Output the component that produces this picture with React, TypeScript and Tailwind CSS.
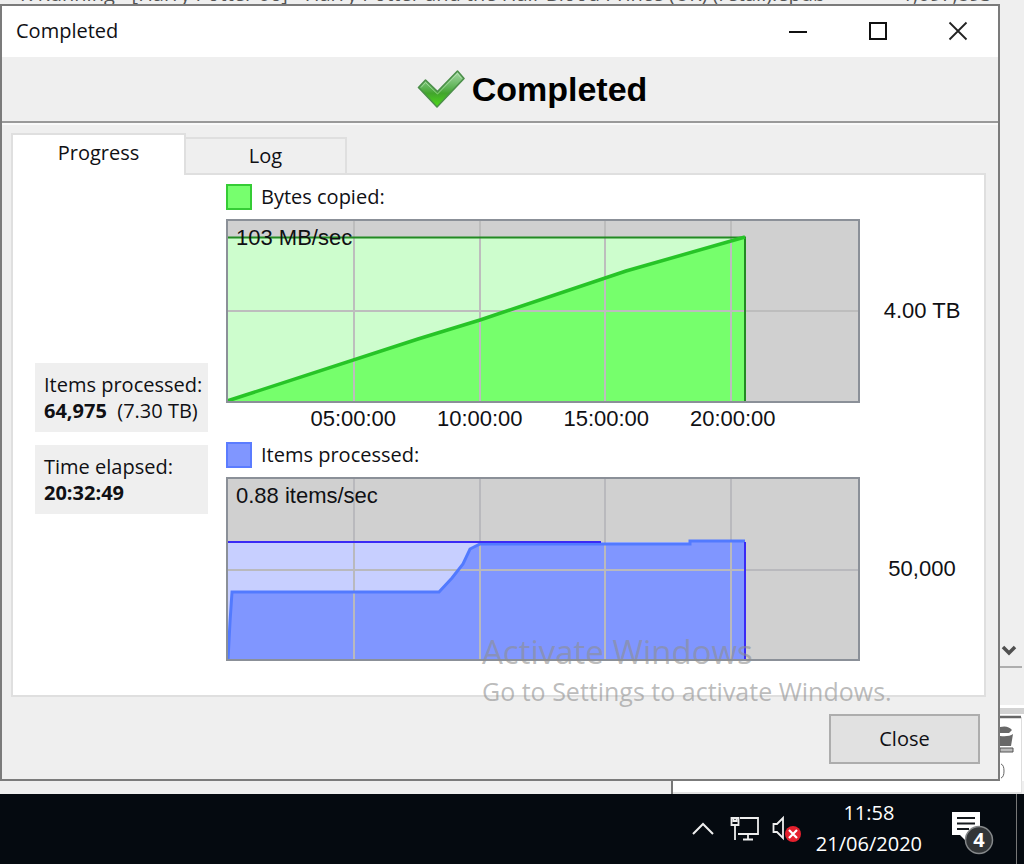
import React, { useState } from "react";

const TIMES = ["05:00:00", "10:00:00", "15:00:00", "20:00:00"];
const GRID_X = [128, 254, 379, 505];

type ChartProps = {
  title: string;
  rate: string;
  axis: string;
  swatch: string;
  children: React.ReactNode;
  times?: string[];
};

function Chart({ title, rate, axis, swatch, children, times }: ChartProps) {
  return (
    <section>
      <h2 className="flex h-[26px] items-center gap-[9px] text-xl leading-[26px]">
        <span className={`size-[26px] border-2 ${swatch}`} />
        {title}
      </h2>
      <div className="mt-[9px] flex items-center font-['Liberation_Sans',sans-serif] text-[22px] leading-[26px]">
        <div className="relative min-w-0 flex-1">
          <svg viewBox="0 0 634 184" preserveAspectRatio="none" className="block h-[184px] w-full" role="img" aria-label={title}>
            {children}
          </svg>
          <span className="absolute top-[6px] left-[10px]">{rate}</span>
        </div>
        <span className="w-[124px] text-center">{axis}</span>
      </div>
      {times && (
        <div className="mr-[124px] grid grid-cols-4 px-16 pt-[3px] text-center font-['Liberation_Sans',sans-serif] text-[22px] leading-[26px]">
          {times.map((t) => (
            <span key={t}>{t}</span>
          ))}
        </div>
      )}
    </section>
  );
}

function Grid({ y, color }: { y: number; color: string }) {
  return (
    <g stroke={color} strokeWidth="2">
      {GRID_X.map((x) => (
        <path key={x} d={`M${x} 1V183`} />
      ))}
      <path d={`M1 ${y}H633`} />
    </g>
  );
}

function Frame() {
  return <rect x="1" y="1" width="632" height="182" fill="none" stroke="#8b9098" strokeWidth="2" />;
}

function CheckMark() {
  return (
    <svg viewBox="0 0 48 40" className="h-10 w-12" aria-hidden="true">
      <defs>
        <linearGradient id="tick" x1="0" y1="0" x2="0" y2="1">
          <stop offset="0" stopColor="#a9d9a9" />
          <stop offset="0.45" stopColor="#5fb457" />
          <stop offset="0.62" stopColor="#42a52c" />
          <stop offset="1" stopColor="#4ddb18" />
        </linearGradient>
      </defs>
      <path d="M1.5 18.5 8.5 11 20.500 22.500 40.500 2 47 9.500 20 38Z" fill="url(#tick)" stroke="#4c8f4a" strokeWidth="1.600" strokeLinejoin="round" />
      <path d="M4 18.500 8.500 13.500 20.500 25 40.500 4.500 44.500 9.500" fill="none" stroke="#c7ecc2" strokeOpacity=".6" />
    </svg>
  );
}

export default function App() {
  const [tab, setTab] = useState("progress");
  return (
    <div className="relative flex min-h-screen flex-col overflow-hidden bg-[#efefef] font-['Open_Sans','Noto_Sans',sans-serif] text-[#101014]">
      <div className="flex h-1 items-end justify-between overflow-hidden pr-8 pl-5 text-xl leading-5 whitespace-pre text-[#555]">
        <span>K Running - [Harry Potter 06] - Harry Potter and the Half-Blood Prince (UK) (retail).epub</span>
        <span>1,097,893</span>
      </div>

      <div className="flex flex-1">
        <main className="flex min-w-0 flex-1 flex-col border-2 border-[#7b7b7b] bg-[#efefef]">
          <header className="flex h-[51px] items-center bg-white pb-[2px] pl-[14px]">
            <span className="flex-1 text-xl">Completed</span>
            <button aria-label="Minimize" className="flex h-full w-20 items-center justify-center">
              <svg viewBox="0 0 20 20" className="size-5" fill="none" stroke="#111" strokeWidth="2"><path d="M1 11H19" /></svg>
            </button>
            <button aria-label="Maximize" className="flex h-full w-20 items-center justify-center">
              <svg viewBox="0 0 20 20" className="size-5" fill="none" stroke="#111" strokeWidth="2"><path d="M2 2H18V18H2Z" /></svg>
            </button>
            <button aria-label="Close window" className="flex h-full w-20 items-center justify-center">
              <svg viewBox="0 0 20 20" className="size-5" fill="none" stroke="#222" strokeWidth="1.8"><path d="M1.500 1.500 18.500 18.500M18.500 1.500 1.500 18.500" /></svg>
            </button>
          </header>

          <div className="flex h-[66px] items-center justify-center gap-[7px] border-b-2 border-[#999] pl-[64px]">
            <CheckMark />
            <h1 className="font-['Liberation_Sans',sans-serif] text-[34px] leading-10 font-bold text-black">Completed</h1>
          </div>
          <div className="h-[2px] bg-[#f9f9f9]" />

          <div role="tablist" className="mr-3 ml-[9px] flex items-end pt-2 text-xl">
            <button role="tab" aria-selected={tab === "progress"} onClick={() => setTab("progress")} className="relative z-10 -mb-[2px] h-[42px] w-[175px] border-2 border-b-0 border-[#dfdfdf] bg-white pb-1">
              Progress
            </button>
            <button role="tab" aria-selected={tab === "log"} onClick={() => setTab("log")} className="-ml-[2px] h-9 w-[163px] border-2 border-b-0 border-[#dfdfdf]">
              Log
            </button>
          </div>

          <div role="tabpanel" className="mr-3 ml-[9px] flex flex-1 border-2 border-[#dfdfdf] bg-white pt-[9px] pl-[22px]">
            {tab === "progress" && (
              <>
                <div className="mr-[18px] flex w-[173px] shrink-0 flex-col gap-[13px] pt-[179px] text-xl leading-[26px] whitespace-nowrap">
                  <div className="bg-[#efefef] px-[9px] pt-[9px] pb-2">
                    Items processed:
                    <div><b>64,975</b>&nbsp; (7.30 TB)</div>
                  </div>
                  <div className="bg-[#efefef] px-[9px] pt-[9px] pb-2">
                    Time elapsed:
                    <div><b>20:32:49</b></div>
                  </div>
                </div>
                <div className="flex min-w-0 flex-1 flex-col gap-[10px]">
                  <Chart title="Bytes copied:" rate="103 MB/sec" axis="4.00 TB" swatch="border-[#35cc35] bg-[#77ff6e]" times={TIMES}>
                    <path d="M0 0H634V184H0Z" fill="#d0d0d0" />
                    <path d="M1 18H520V183H1Z" fill="#cdfdcd" />
                    <path d="M1 183 192 120 254 101 400 52 519 18V183Z" fill="#76ff6c" />
                    <Grid y={92} color="#bdbdbd" />
                    <path d="M1 18.500H519V183" fill="none" stroke="#238a23" strokeWidth="2" />
                    <path d="M1 182 192 120 254 101 400 52 519 18" fill="none" stroke="#27c427" strokeWidth="3.500" />
                    <Frame />
                  </Chart>
                  <Chart title="Items processed:" rate="0.88 items/sec" axis="50,000" swatch="border-[#5b7cff] bg-[#8096ff]">
                    <path d="M0 0H634V184H0Z" fill="#d0d0d0" />
                    <path d="M1 65H520V183H1Z" fill="#c7cfff" />
                    <path d="M1 183 6 116H213L232 95 243 73 254 67H464V64H519V183Z" fill="#8096ff" />
                    <Grid y={93} color="#b9b9bd" />
                    <path d="M2 183 4 145 6 115H213L226 101 237 87 244 72 254 67H464V64H519" fill="none" stroke="#527aff" strokeWidth="3" />
                    <path d="M1 65H375M519 65V183" fill="none" stroke="#3a2af5" strokeWidth="2" />
                    <Frame />
                  </Chart>
                </div>
              </>
            )}
          </div>

          <footer className="flex justify-end pt-[17px] pr-[18px] pb-[15px]">
            <button className="h-[50px] w-[151px] border-2 border-[#adadad] bg-[#e1e1e1] text-xl">Close</button>
          </footer>
        </main>

        <aside className="flex w-6 flex-col justify-end bg-[#efefef]">
          <svg viewBox="0 0 24 150" className="h-[150px] w-6" aria-hidden="true">
            <path d="M3 16 9 22 15 16" fill="none" stroke="#505050" strokeWidth="3.500" />
            <path d="M0 36H22" stroke="#999" strokeWidth="1.500" />
            <path d="M0 74H24V77H0Z" fill="#fff" />
            <path d="M0 77H24V83H0Z" fill="#d2d2d2" />
            <path d="M0 83H24V150H0Z" fill="#fff" />
            <path d="M0 86H21" stroke="#666" strokeWidth="2.500" />
            <path d="M21.500 86V150" stroke="#ddd" strokeWidth="1" />
            <path d="M0 96Q8 94 12 99L9 102H0ZM0 105Q9 106 13 103L11 115H0Z" fill="#686868" />
            <path d="M0 117H13V121H0Z" fill="#bbb" stroke="#555" />
            <path d="M1 133Q4 134 4 140T1 147" fill="none" stroke="#666" />
          </svg>
        </aside>
      </div>

      <div className="flex h-[13px]">
        <div className="flex-1 border-r-2 border-[#777]" />
        <div className="mr-[2px] w-[349px] border-r border-b-2 border-[#e2e2e2] bg-white" />
      </div>

      <footer className="flex h-[70px] items-center justify-end bg-[#050a10] text-white">
        <button aria-label="Show hidden icons" className="mr-4">
          <svg viewBox="0 0 22 14" className="block h-[14px] w-[22px]" fill="none" stroke="#eee" strokeWidth="2"><path d="M1 12 11 2 21 12" /></svg>
        </button>
        <button aria-label="Network" className="mr-[12px]">
          <svg viewBox="0 0 30 26" className="block h-[26px] w-[30px]" fill="none" stroke="#eee" strokeWidth="1.800">
            <path d="M10 2H28V18H8M18 18V23M13 23.500H23M1.500 2H8.500V9H1.500ZM3.500 2V5H6.500V2M5 9V24" />
          </svg>
        </button>
        <button aria-label="Volume" className="mr-[14px]">
          <svg viewBox="0 0 30 28" className="block h-7 w-[30px]">
            <path d="M1.500 9H5L11 3V23L5 17H1.500Z" fill="none" stroke="#eee" strokeWidth="1.800" />
            <circle cx="21" cy="19" r="8" fill="#e5202d" />
            <path d="M17 15 25 23M25 15 17 23" stroke="#fff" strokeWidth="2.200" />
          </svg>
        </button>
        <button className="mr-[28px] pb-[2px] text-center text-xl leading-[31px]">
          <time className="block">11:58</time>
          <time className="block">21/06/2020</time>
        </button>
        <button aria-label="4 notifications" className="relative mt-2 mr-[22px] h-11 w-[44px]">
          <svg viewBox="0 0 44 44" className="block size-11" aria-hidden="true">
            <path d="M2 1H30V24H17V31L10 24H2Z" fill="#fff" />
            <path d="M7 7H25M7 12.500H25M7 18H19" stroke="#15191d" strokeWidth="2" />
            <circle cx="29" cy="29" r="13.500" fill="#333638" stroke="#85888a" strokeWidth="1.500" />
          </svg>
          <span className="absolute top-[15px] left-[22px] w-[14px] text-center text-xl leading-7 font-bold">4</span>
        </button>
        <span className="mr-[7px] h-full w-[1px] bg-[#777]" />
      </footer>

      <div className="pointer-events-none absolute top-[632px] left-[482px] whitespace-nowrap text-[#8f8f8f]/60">
        <p className="text-[33px] leading-10">Activate Windows</p>
        <p className="text-[25px] leading-[38px]">Go to Settings to activate Windows.</p>
      </div>
    </div>
  );
}
